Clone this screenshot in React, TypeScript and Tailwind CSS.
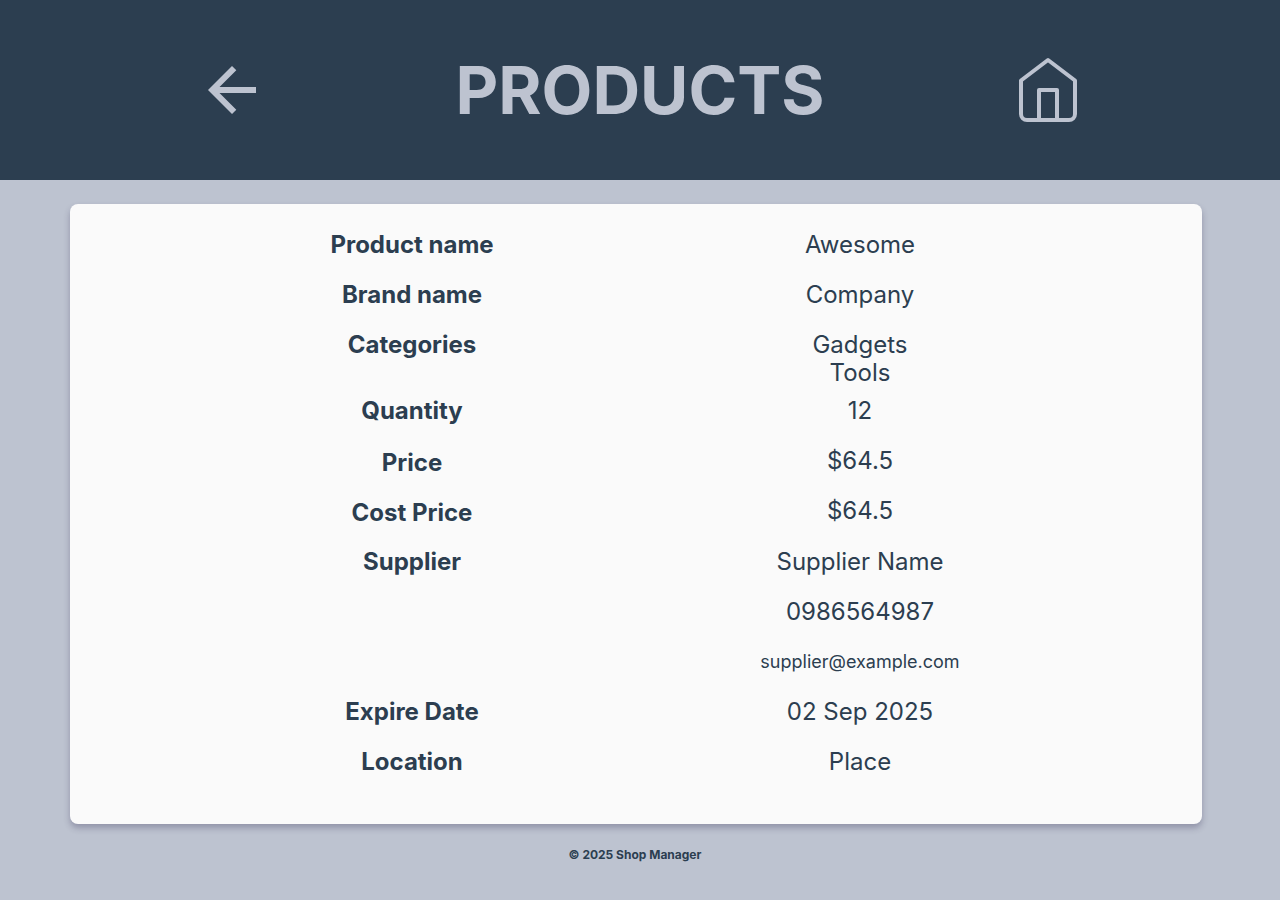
import { Fragment } from "react";

type Row = { label: string; values: string[]; size: string; labelPad: string; height: string };

const rows: Row[] = [
  { label: "Product name", values: ["Awesome"], size: "text-2xl/7", labelPad: "", height: "h-[50px]" },
  { label: "Brand name", values: ["Company"], size: "text-2xl/7", labelPad: "", height: "h-[50px]" },
  { label: "Categories", values: ["Gadgets", "Tools"], size: "text-2xl/7", labelPad: "", height: "h-[66px]" },
  { label: "Quantity", values: ["12"], size: "text-2xl/7", labelPad: "", height: "h-[50px]" },
  { label: "Price", values: ["$64.5"], size: "text-2xl/7", labelPad: "pt-0.5", height: "h-[50px]" },
  { label: "Cost Price", values: ["$64.5"], size: "text-2xl/7", labelPad: "pt-0.5", height: "h-[51px]" },
  { label: "Supplier", values: ["Supplier Name"], size: "text-2xl/7", labelPad: "", height: "h-[50px]" },
  { label: "", values: ["0986564987"], size: "text-2xl/7", labelPad: "", height: "h-[50px]" },
  { label: "", values: ["supplier@example.com"], size: "text-lg/7", labelPad: "", height: "h-[50px]" },
  { label: "Expire Date", values: ["02 Sep 2025"], size: "text-2xl/7", labelPad: "", height: "h-[50px]" },
  { label: "Location", values: ["Place"], size: "text-2xl/7", labelPad: "", height: "h-[50px]" },
];

function BackIcon() {
  return (
    <svg width="48" height="48" viewBox="0 0 48 48" fill="currentColor" aria-hidden="true">
      <path d="M11.5 27 28.3 43.8 24 48 0 24 24 0l4.3 4.2L11.5 21H48v6z" />
    </svg>
  );
}

function HomeIcon() {
  return (
    <svg width="60" height="66" viewBox="0 0 60 66" fill="none" stroke="currentColor" strokeWidth="4" aria-hidden="true">
      <path d="M3 23.5 30 3l27 20.5V57a6 6 0 0 1-6 6H9a6 6 0 0 1-6-6z" strokeLinejoin="round" />
      <path d="M21 63V33h18v30" strokeLinejoin="round" />
    </svg>
  );
}

export default function App() {
  return (
    <div className="flex min-h-screen flex-col bg-[#bdc3d0] font-['Inter',sans-serif] text-[#2c3e50]">
      <header className="grid h-[180px] grid-cols-3 place-items-center bg-[#2c3e50] px-7 text-[#bdc3d0]">
        <button type="button" aria-label="Back">
          <BackIcon />
        </button>
        <h1 className="text-[66px]/[80px] font-bold">PRODUCTS</h1>
        <a href="#home" aria-label="Home">
          <HomeIcon />
        </a>
      </header>
      <main className="mt-6 mr-[78px] ml-[70px] rounded-lg bg-[#fafafa] px-[118px] pt-[27px] pb-[26px] shadow-[0_4px_6px_rgba(45,40,80,0.3)]">
        <table className="w-full table-fixed text-center">
          <tbody>
            {rows.map((row) => (
              <tr key={row.values[0] + row.label} className={row.height}>
                <th scope="row" className={`align-top text-2xl/7 font-bold ${row.labelPad}`}>
                  {row.label}
                </th>
                <td className={`align-top ${row.size}`}>
                  {row.values.map((value, i) => (
                    <Fragment key={value}>
                      {i > 0 && <br />}
                      {value}
                    </Fragment>
                  ))}
                </td>
              </tr>
            ))}
          </tbody>
        </table>
      </main>
      <footer className="mt-[23px] mr-20 ml-[70px] text-center text-xs font-bold">© 2025 Shop Manager</footer>
    </div>
  );
}
